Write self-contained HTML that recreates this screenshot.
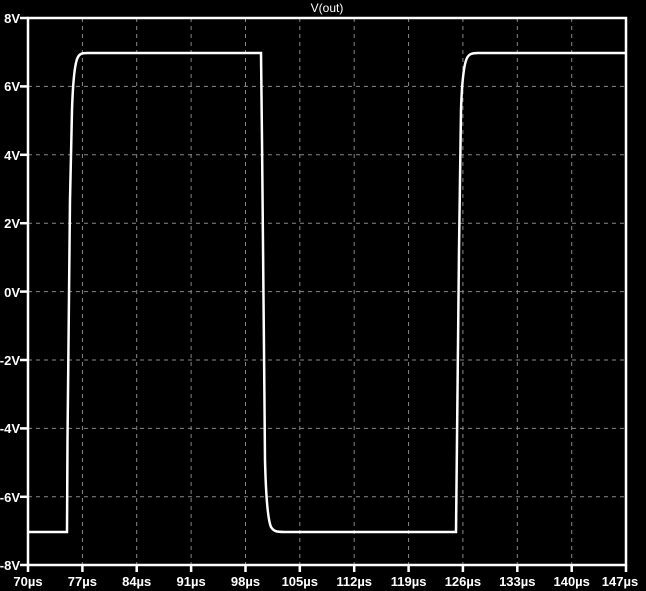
<!DOCTYPE html>
<html><head><style>
html,body{margin:0;padding:0;background:#000;}
svg{display:block}
text{font-family:"Liberation Sans",sans-serif;font-size:13px;fill:#fff;font-weight:bold}
</style></head><body>
<svg width="646" height="591" viewBox="0 0 646 591">
<rect width="646" height="591" fill="#000"/>
<g stroke="#888" stroke-width="1" stroke-dasharray="4,4">
<line x1="28" y1="86.4" x2="626" y2="86.4"/>
<line x1="28" y1="154.8" x2="626" y2="154.8"/>
<line x1="28" y1="223.2" x2="626" y2="223.2"/>
<line x1="28" y1="291.6" x2="626" y2="291.6"/>
<line x1="28" y1="360" x2="626" y2="360"/>
<line x1="28" y1="428.4" x2="626" y2="428.4"/>
<line x1="28" y1="496.8" x2="626" y2="496.8"/>
<line x1="82.4" y1="18" x2="82.4" y2="565"/>
<line x1="136.7" y1="18" x2="136.7" y2="565"/>
<line x1="191.1" y1="18" x2="191.1" y2="565"/>
<line x1="245.5" y1="18" x2="245.5" y2="565"/>
<line x1="299.8" y1="18" x2="299.8" y2="565"/>
<line x1="354.2" y1="18" x2="354.2" y2="565"/>
<line x1="408.6" y1="18" x2="408.6" y2="565"/>
<line x1="462.9" y1="18" x2="462.9" y2="565"/>
<line x1="517.3" y1="18" x2="517.3" y2="565"/>
<line x1="571.7" y1="18" x2="571.7" y2="565"/>
</g>
<rect x="28" y="18" width="598" height="547" fill="none" stroke="#fff" stroke-width="2.5"/>
<g stroke="#fff" stroke-width="2.5">
<line x1="20" y1="18" x2="28" y2="18"/><line x1="20" y1="86.4" x2="28" y2="86.4"/><line x1="20" y1="154.8" x2="28" y2="154.8"/><line x1="20" y1="223.2" x2="28" y2="223.2"/><line x1="20" y1="291.6" x2="28" y2="291.6"/><line x1="20" y1="360" x2="28" y2="360"/><line x1="20" y1="428.4" x2="28" y2="428.4"/><line x1="20" y1="496.8" x2="28" y2="496.8"/><line x1="20" y1="565" x2="28" y2="565"/>
<line x1="28" y1="565" x2="28" y2="572"/><line x1="82.4" y1="565" x2="82.4" y2="572"/><line x1="136.7" y1="565" x2="136.7" y2="572"/><line x1="191.1" y1="565" x2="191.1" y2="572"/><line x1="245.5" y1="565" x2="245.5" y2="572"/><line x1="299.8" y1="565" x2="299.8" y2="572"/><line x1="354.2" y1="565" x2="354.2" y2="572"/><line x1="408.6" y1="565" x2="408.6" y2="572"/><line x1="462.9" y1="565" x2="462.9" y2="572"/><line x1="517.3" y1="565" x2="517.3" y2="572"/><line x1="571.7" y1="565" x2="571.7" y2="572"/><line x1="626" y1="565" x2="626" y2="572"/>
</g>
<path d="M28,532 L67,532 L67.5,440 L70,200 L72,110 C73,80 75,62 78,57 C80,53 84,53 88,53 L261,53 L262,140 L264,350 L265,460 C266,500 268,520 271,527 C274,532 278,532 285,532 L456,532 L457,440 L459,250 L461,110 C462,80 464,64 467,58 C469,54 472,53 478,53 L626,53" fill="none" stroke="#fff" stroke-width="2.5"/>
<text x="327" y="12" text-anchor="middle" style="font-weight:normal;font-size:12px">V(out)</text>
<g text-anchor="end">
<text x="20" y="23">8V</text><text x="20" y="91">6V</text><text x="20" y="160">4V</text><text x="20" y="228">2V</text><text x="20" y="297">0V</text><text x="20" y="365">-2V</text><text x="20" y="433">-4V</text><text x="20" y="502">-6V</text><text x="20" y="570">-8V</text>
</g>
<g text-anchor="middle">
<text x="28" y="586">70µs</text><text x="82.4" y="586">77µs</text><text x="136.7" y="586">84µs</text><text x="191.1" y="586">91µs</text><text x="245.5" y="586">98µs</text><text x="299.8" y="586">105µs</text><text x="354.2" y="586">112µs</text><text x="408.6" y="586">119µs</text><text x="462.9" y="586">126µs</text><text x="517.3" y="586">133µs</text><text x="571.7" y="586">140µs</text><text x="620" y="586">147µs</text>
</g>
</svg>
</body></html>
